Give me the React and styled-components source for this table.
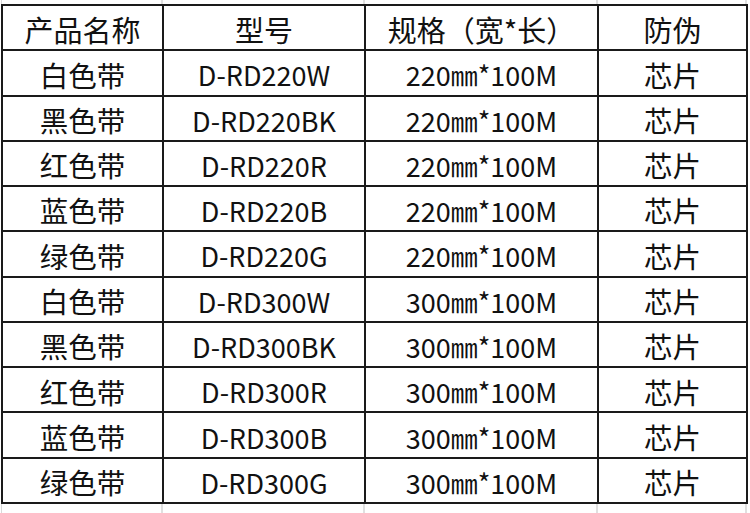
import styled, { createGlobalStyle } from "styled-components";

const GlobalStyle = createGlobalStyle`
  html, body {
    margin: 0;
    padding: 0;
    background: #ffffff;
  }
  body {
    font-family: "Noto Sans CJK SC", "Noto Sans", sans-serif;
    color: #111111;
  }
`;

const columns = "161px 202px 233px 149px";

const rows = [
  ["白色带", "D-RD220W", "220㎜*100M", "芯片"],
  ["黑色带", "D-RD220BK", "220㎜*100M", "芯片"],
  ["红色带", "D-RD220R", "220㎜*100M", "芯片"],
  ["蓝色带", "D-RD220B", "220㎜*100M", "芯片"],
  ["绿色带", "D-RD220G", "220㎜*100M", "芯片"],
  ["白色带", "D-RD300W", "300㎜*100M", "芯片"],
  ["黑色带", "D-RD300BK", "300㎜*100M", "芯片"],
  ["红色带", "D-RD300R", "300㎜*100M", "芯片"],
  ["蓝色带", "D-RD300B", "300㎜*100M", "芯片"],
  ["绿色带", "D-RD300G", "300㎜*100M", "芯片"],
];

const headers = ["产品名称", "型号", "规格（宽*长）", "防伪"];

// columns holding mostly latin text are set a little smaller
const latinCols = [1, 2];

function App() {
  return (
    <>
      <GlobalStyle />
      <Sheet>
        <GridStrip $height={4}>
          {headers.map((h) => (
            <Blank key={h} />
          ))}
        </GridStrip>
        <Table>
          {headers.map((h) => (
            <Cell key={h} $size={29}>
              {h}
            </Cell>
          ))}
          {rows.map((row, i) =>
            row.map((text, j) => (
              <Cell key={`${i}-${j}`} $size={latinCols.includes(j) ? 27 : 28.5}>
                {text}
              </Cell>
            ))
          )}
        </Table>
        <GridStrip $height={9}>
          {headers.map((h) => (
            <Blank key={h} />
          ))}
        </GridStrip>
      </Sheet>
    </>
  );
}

const Sheet = styled.div`
  display: flex;
  flex-direction: column;
  width: 750px;
  height: 513px;
  padding-left: 1px;
  box-sizing: border-box;
  overflow: hidden;
`;

const GridStrip = styled.div`
  display: grid;
  grid-template-columns: ${columns};
  height: ${(p) => p.$height}px;
  border-left: 1px solid #d9d9d9;
`;

const Blank = styled.div`
  border-right: 2px solid #e0e0e0;
`;

const Table = styled.div`
  display: grid;
  grid-template-columns: ${columns};
  grid-template-rows: repeat(11, 1fr);
  height: 500px;
  width: 747px;
  border-top: 2px solid #1a1a1a;
  border-left: 2px solid #1a1a1a;
  box-sizing: border-box;
`;

const Cell = styled.div`
  display: flex;
  align-items: center;
  justify-content: center;
  padding-top: 4px;
  border-right: 2px solid #1a1a1a;
  border-bottom: 2px solid #1a1a1a;
  font-size: ${(p) => p.$size}px;
  font-weight: 400;
  line-height: 1;
  white-space: nowrap;
  color: #111111;
`;

export default App;
